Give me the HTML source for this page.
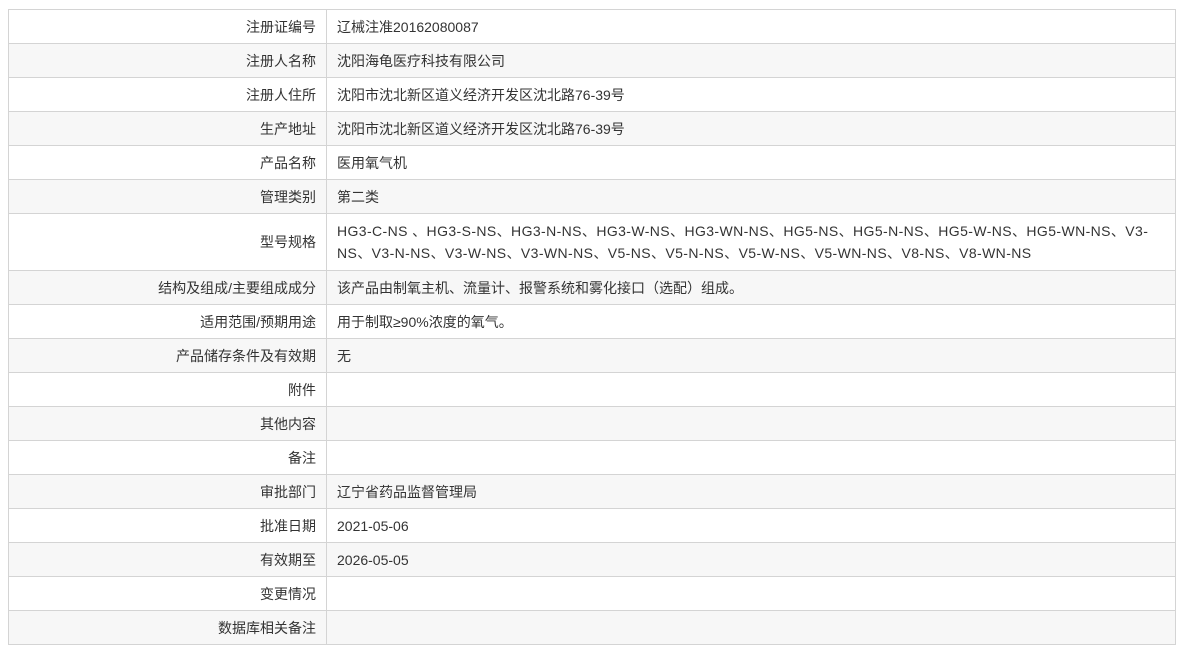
<!DOCTYPE html>
<html><head><meta charset="utf-8"><style>
body{margin:0;background:#fff;font-family:"Liberation Sans","Noto Sans CJK SC",sans-serif;font-size:14px;color:#333;}
table{position:absolute;left:8px;top:9px;width:1168px;border-collapse:collapse;}
td{border:1px solid #d4d4d4;height:33px;padding:0 10px;line-height:22px;}
td.l{width:297px;text-align:right;}
tr:nth-child(even) td{background:#f7f7f7;}
td.tall{height:56px;white-space:nowrap;}
td.tall+td{letter-spacing:0.4px;}
</style></head><body>
<table>
<tr><td class="l">注册证编号</td><td>辽械注准20162080087</td></tr>
<tr><td class="l">注册人名称</td><td>沈阳海龟医疗科技有限公司</td></tr>
<tr><td class="l">注册人住所</td><td>沈阳市沈北新区道义经济开发区沈北路76-39号</td></tr>
<tr><td class="l">生产地址</td><td>沈阳市沈北新区道义经济开发区沈北路76-39号</td></tr>
<tr><td class="l">产品名称</td><td>医用氧气机</td></tr>
<tr><td class="l">管理类别</td><td>第二类</td></tr>
<tr><td class="l tall">型号规格</td><td class="tall">HG3-C-NS 、HG3-S-NS、HG3-N-NS、HG3-W-NS、HG3-WN-NS、HG5-NS、HG5-N-NS、HG5-W-NS、HG5-WN-NS、V3-<br>NS、V3-N-NS、V3-W-NS、V3-WN-NS、V5-NS、V5-N-NS、V5-W-NS、V5-WN-NS、V8-NS、V8-WN-NS</td></tr>
<tr><td class="l">结构及组成/主要组成成分</td><td>该产品由制氧主机、流量计、报警系统和雾化接口（选配）组成。</td></tr>
<tr><td class="l">适用范围/预期用途</td><td>用于制取≥90%浓度的氧气。</td></tr>
<tr><td class="l">产品储存条件及有效期</td><td>无</td></tr>
<tr><td class="l">附件</td><td></td></tr>
<tr><td class="l">其他内容</td><td></td></tr>
<tr><td class="l">备注</td><td></td></tr>
<tr><td class="l">审批部门</td><td>辽宁省药品监督管理局</td></tr>
<tr><td class="l">批准日期</td><td>2021-05-06</td></tr>
<tr><td class="l">有效期至</td><td>2026-05-05</td></tr>
<tr><td class="l">变更情况</td><td></td></tr>
<tr><td class="l">数据库相关备注</td><td></td></tr>
</table>
</body></html>
